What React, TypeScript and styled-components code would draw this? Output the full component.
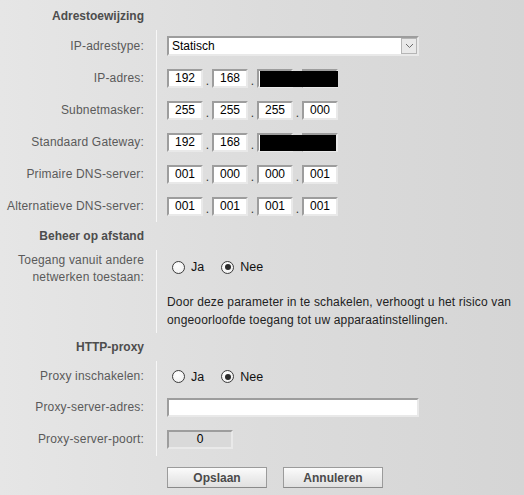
import React from "react";
import styled, { createGlobalStyle } from "styled-components";

const Global = createGlobalStyle`
  html, body { margin: 0; padding: 0; }
  body {
    width: 524px;
    height: 495px;
    overflow: hidden;
    background: linear-gradient(to right, #e6e6e6 0%, #dcdcdc 50%, #d5d5d5 100%);
    font-family: "Liberation Sans", Arial, sans-serif;
    font-size: 12px;
  }
`;

const Page = styled.div`
  padding-top: 2px;
  width: 524px;
  height: 495px;
  box-sizing: border-box;
`;

const Row = styled.div<{ $h: number }>`
  display: flex;
  align-items: stretch;
  height: ${(p) => p.$h}px;
`;

const Label = styled.div<{ $bold?: boolean; $top?: boolean }>`
  width: 144px;
  flex: none;
  display: flex;
  align-items: ${(p) => (p.$top ? "flex-start" : "center")};
  justify-content: flex-end;
  text-align: right;
  color: ${(p) => (p.$bold ? "#4d4d4d" : "#5a5a5a")};
  font-weight: ${(p) => (p.$bold ? "bold" : "normal")};
  letter-spacing: ${(p) => (p.$bold ? "0" : "0.18px")};
  line-height: 17px;
  padding-top: ${(p) => (p.$top ? "2px" : "0")};
  box-sizing: border-box;
  white-space: nowrap;
`;

const Field = styled.div<{ $line?: boolean; $col?: boolean }>`
  margin-left: 12px;
  border-left: 1px solid ${(p) => (p.$line ? "#f7f7f7" : "transparent")};
  padding-left: 10px;
  flex: 1;
  display: flex;
  flex-direction: ${(p) => (p.$col ? "column" : "row")};
  align-items: ${(p) => (p.$col ? "flex-start" : "center")};
`;

const inset = `
  box-sizing: border-box;
  border-style: solid;
  border-width: 2px;
  border-color: #9d9d9d #e9e9e9 #e9e9e9 #9d9d9d;
`;

const Select = styled.div`
  ${inset}
  width: 252px;
  height: 20px;
  background: #fff;
  display: flex;
  align-items: center;
  justify-content: space-between;
  padding-left: 3px;
  color: #000;
  font-size: 12px;
`;

const SelectArrow = styled.div`
  width: 16px;
  height: 16px;
  box-sizing: border-box;
  border: 1px solid #b5b5b5;
  background: #e9e9e9;
  display: flex;
  align-items: center;
  justify-content: center;
`;

const IpGroup = styled.div`
  position: relative;
  display: flex;
  align-items: center;
`;

const IpBox = styled.div`
  ${inset}
  width: 36px;
  height: 19px;
  background: #fff;
  color: #000;
  font-size: 12px;
  line-height: 15px;
  text-align: center;
`;

const Dot = styled.span`
  width: 9px;
  text-align: center;
  align-self: flex-end;
  line-height: 14px;
  color: #333;
`;

const Redaction = styled.div`
  position: absolute;
  left: 93px;
  top: 2px;
  height: 16px;
  background: #000;
`;

const RadioGroup = styled.div`
  display: flex;
  align-items: center;
  padding-left: 5px;
`;

const RadioCircle = styled.span<{ $on?: boolean }>`
  width: 13px;
  height: 13px;
  box-sizing: border-box;
  border-radius: 50%;
  border: 1px solid #3c3c3c;
  background: radial-gradient(circle at 40% 35%, #ffffff 0%, #f2f2f2 70%, #dedede 100%);
  display: inline-flex;
  align-items: center;
  justify-content: center;
  &::after {
    content: "";
    display: ${(p) => (p.$on ? "block" : "none")};
    width: 6px;
    height: 6px;
    border-radius: 50%;
    background: #2a2a2a;
  }
`;

const RadioText = styled.span<{ $gap: number }>`
  margin-left: 6px;
  margin-right: ${(p) => p.$gap}px;
  color: #111;
  font-size: 12.5px;
`;

const RadioLine = styled.div`
  height: 34px;
  display: flex;
  align-items: center;
`;

const Note = styled.div`
  color: #222;
  line-height: 18px;
  margin-top: 9px;
  letter-spacing: 0.16px;
  white-space: nowrap;
`;

const TextInput = styled.div<{ $w: number; $disabled?: boolean }>`
  ${inset}
  width: ${(p) => p.$w}px;
  height: 19px;
  background: ${(p) => (p.$disabled ? "#d9d9d9" : "#fff")};
  color: #000;
  text-align: center;
  line-height: 15px;
`;

const Buttons = styled.div`
  display: flex;
  gap: 16px;
  padding-left: 167px;
  padding-top: 11px;
`;

const Button = styled.div`
  width: 100px;
  height: 21px;
  box-sizing: border-box;
  border: 1px solid #9b9b9b;
  border-bottom-color: #8a8a8a;
  background: linear-gradient(to bottom, #fbfbfb 0%, #eeeeee 45%, #e0e0e0 100%);
  color: #4a4a4a;
  font-weight: bold;
  display: flex;
  align-items: center;
  justify-content: center;
`;

type Ip = { vals: string[]; redact?: number };

const IpInput = ({ vals, redact }: Ip) => (
  <IpGroup>
    {vals.map((v, i) => (
      <React.Fragment key={i}>
        {i > 0 && <Dot>.</Dot>}
        <IpBox>{v}</IpBox>
      </React.Fragment>
    ))}
    {redact ? <Redaction style={{ width: redact }} /> : null}
  </IpGroup>
);

const YesNo = () => (
  <RadioGroup>
    <RadioCircle />
    <RadioText $gap={17}>Ja</RadioText>
    <RadioCircle $on />
    <RadioText $gap={0}>Nee</RadioText>
  </RadioGroup>
);

const Chevron = () => (
  <svg width="9" height="6" viewBox="0 0 9 6">
    <path d="M1 1 L4.5 4.5 L8 1" fill="none" stroke="#6b6b6b" strokeWidth="1" />
  </svg>
);

export default function App() {
  return (
    <Page>
      <Global />
      <Row $h={28}>
        <Label $bold>Adrestoewijzing</Label>
        <Field />
      </Row>
      <Row $h={32}>
        <Label>IP-adrestype:</Label>
        <Field $line>
          <Select>
            <span>Statisch</span>
            <SelectArrow>
              <Chevron />
            </SelectArrow>
          </Select>
        </Field>
      </Row>
      <Row $h={32}>
        <Label>IP-adres:</Label>
        <Field $line>
          <IpInput vals={["192", "168", "", ""]} redact={78} />
        </Field>
      </Row>
      <Row $h={32}>
        <Label>Subnetmasker:</Label>
        <Field $line>
          <IpInput vals={["255", "255", "255", "000"]} />
        </Field>
      </Row>
      <Row $h={32}>
        <Label>Standaard Gateway:</Label>
        <Field $line>
          <IpInput vals={["192", "168", "", ""]} redact={76} />
        </Field>
      </Row>
      <Row $h={32}>
        <Label>Primaire DNS-server:</Label>
        <Field $line>
          <IpInput vals={["001", "000", "000", "001"]} />
        </Field>
      </Row>
      <Row $h={32}>
        <Label>Alternatieve DNS-server:</Label>
        <Field $line>
          <IpInput vals={["001", "001", "001", "001"]} />
        </Field>
      </Row>

      <Row $h={28}>
        <Label $bold>Beheer op afstand</Label>
        <Field />
      </Row>
      <Row $h={83}>
        <Label $top>
          Toegang vanuit andere
          <br />
          netwerken toestaan:
        </Label>
        <Field $line $col>
          <RadioLine>
            <YesNo />
          </RadioLine>
          <Note>
            Door deze parameter in te schakelen, verhoogt u het risico van
            <br />
            ongeoorloofde toegang tot uw apparaatinstellingen.
          </Note>
        </Field>
      </Row>

      <Row $h={28}>
        <Label $bold>HTTP-proxy</Label>
        <Field />
      </Row>
      <Row $h={31}>
        <Label>Proxy inschakelen:</Label>
        <Field $line>
          <YesNo />
        </Field>
      </Row>
      <Row $h={31}>
        <Label>Proxy-server-adres:</Label>
        <Field $line>
          <TextInput $w={252} />
        </Field>
      </Row>
      <Row $h={33}>
        <Label>Proxy-server-poort:</Label>
        <Field $line>
          <TextInput $w={66} $disabled>
            0
          </TextInput>
        </Field>
      </Row>

      <Buttons>
        <Button>Opslaan</Button>
        <Button>Annuleren</Button>
      </Buttons>
    </Page>
  );
}
